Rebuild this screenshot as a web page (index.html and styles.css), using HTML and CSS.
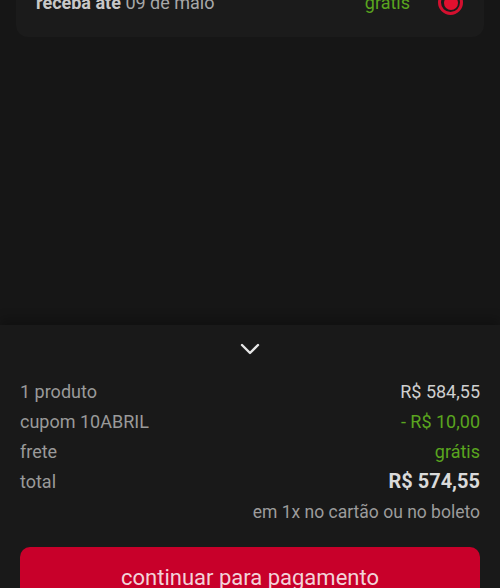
FILE: index.html
```html
<!DOCTYPE html>
<html lang="pt">
  <head>
    <meta charset="UTF-8" />
    <meta name="viewport" content="width=device-width, initial-scale=1.0" />
    <title>resumo do pedido</title>
    <link rel="stylesheet" href="styles.css">
  </head>
  <body>
    <div class="page">
      <div class="ship-card">
        <p class="ship-date"><b>receba até</b> 09 de maio</p>
        <span class="ship-price">grátis</span>
        <span class="radio"><span class="dot"></span></span>
      </div>

      <div class="summary">
        <div class="toggle">
          <svg width="20" height="12" viewBox="0 0 20 12">
            <path d="M2 2 L10 10 L18 2" fill="none" stroke="#e6e6e6" stroke-width="2.4" stroke-linecap="round" stroke-linejoin="round" />
          </svg>
        </div>
        <div class="row">
          <span class="label">1 produto</span>
          <span class="value">R$ 584,55</span>
        </div>
        <div class="row">
          <span class="label">cupom 10ABRIL</span>
          <span class="value green">- R$ 10,00</span>
        </div>
        <div class="row">
          <span class="label">frete</span>
          <span class="value green">grátis</span>
        </div>
        <div class="row">
          <span class="label">total</span>
          <span class="value total">R$ 574,55</span>
        </div>
        <p class="terms">em 1x no cartão ou no boleto</p>
        <button class="pay">continuar para pagamento</button>
      </div>
    </div>
  </body>
</html>
```

FILE: styles.css
```css
* {
  padding: 0;
  margin: 0;
  box-sizing: border-box;
}
html,
body {
  background: #161616;
  font-family: Roboto, "Liberation Sans", sans-serif;
}
.page {
  display: flex;
  flex-direction: column;
  justify-content: space-between;
  height: 588px;
  overflow: hidden;
}
.ship-card {
  display: flex;
  align-items: center;
  margin: -24px 16px 0;
  height: 61px;
  padding: 0 21px 8px 20px;
  background: #1b1b1b;
  border-radius: 0 0 12px 12px;
}
.ship-date {
  flex: 1;
  font-size: 18px;
  color: #a8a8a8;
}
.ship-date b {
  color: #c8c8c8;
}
.ship-price {
  font-size: 18px;
  color: #5aa51f;
  margin-right: 28px;
}
.radio {
  display: flex;
  align-items: center;
  justify-content: center;
  width: 25px;
  height: 25px;
  border: 3px solid #d3102f;
  border-radius: 50%;
}
.radio .dot {
  width: 14px;
  height: 14px;
  border-radius: 50%;
  background: #e2102f;
}
.summary {
  height: 263px;
  background: #191919;
  box-shadow: 0 -6px 10px rgba(0, 0, 0, 0.25);
  padding: 0 20px;
}
.toggle {
  display: flex;
  justify-content: center;
  padding-top: 18px;
  height: 51px;
}
.row {
  display: flex;
  justify-content: space-between;
  align-items: center;
  height: 30px;
  font-size: 18px;
}
.label {
  color: #9a9a9a;
}
.value {
  color: #cfcfcf;
}
.value.green {
  color: #5aa51f;
}
.value.total {
  font-size: 20px;
  font-weight: bold;
  color: #dadada;
}
.terms {
  text-align: right;
  font-size: 17.5px;
  color: #9c9c9c;
  line-height: 32px;
}
.pay {
  display: block;
  width: 100%;
  height: 56px;
  margin-top: 19px;
  padding-top: 5px;
  background: #c8002a;
  border: none;
  border-radius: 10px;
  color: #f2d3d9;
  font-family: Roboto, "Liberation Sans", sans-serif;
  font-size: 22px;
}
```
